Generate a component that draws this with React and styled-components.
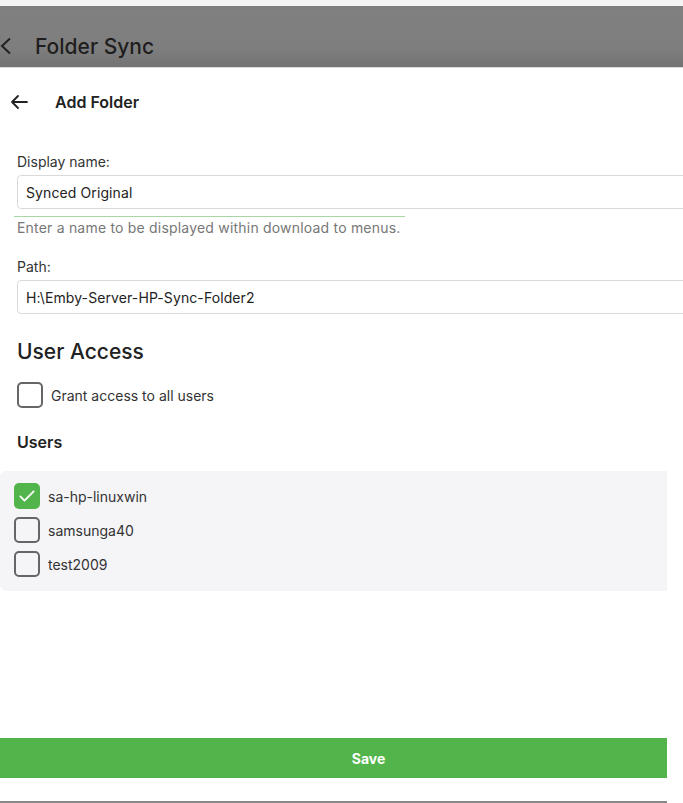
import React, { useState } from 'react'
import styled, { createGlobalStyle } from 'styled-components'

const GlobalStyle = createGlobalStyle`
	body {
		margin: 0;
		background: #fff;
		font-family: Inter, "Noto Sans", sans-serif;
		color: #222;
		overflow: hidden;
	}
`;

const Page = styled.div`
	width: 100%;
	height: 803px;
	display: flex;
	flex-direction: column;
	overflow: hidden;
`;

const TopStrip = styled.div`
	height: 6px;
	background: #f4f4f4;
`;

const Header = styled.div`
	box-sizing: border-box;
	height: 62px;
	display: flex;
	align-items: center;
	gap: 23px;
	padding-top: 19px;
	background: linear-gradient(to bottom, #808080 0%, #7e7e7e 70%, #737373 100%);
	border-bottom: 1px solid #dcdcdc;
`;

const HeaderTitle = styled.h1`
	margin: 0;
	font-size: 21px;
	font-weight: 500;
	color: #1e1e1e;
`;

const IconButton = styled.div`
	display: flex;
	align-items: center;
	justify-content: center;
	width: ${props => props.size || 24}px;
	color: #222;
	margin-left: ${props => props.offset || 0}px;
`;

const SubHeader = styled.div`
	display: flex;
	align-items: center;
	height: 34px;
	margin-top: 17px;
	gap: 27px;
`;

const SubTitle = styled.h2`
	margin: 0;
	font-size: 16px;
	font-weight: 600;
	color: #222;
`;

const Form = styled.div`
	display: flex;
	flex-direction: column;
	padding: 0 0 0 17px;
	margin-top: 33px;
`;

const Label = styled.label`
	font-size: 14px;
	line-height: 20px;
	color: #333;
	margin-top: ${props => props.top || 0}px;
`;

const Input = styled.div`
	box-sizing: border-box;
	width: calc(100% + 40px);
	height: 34px;
	margin-top: 3px;
	border: 1px solid #dadada;
	border-radius: 4px;
	display: flex;
	align-items: center;
	padding-left: 8px;
	font-size: 14px;
	letter-spacing: 0.1px;
	color: #222;
`;

const Underline = styled.div`
	width: 391px;
	height: 1px;
	background: #a9d6a5;
	margin: 7px 0 0 -3px;
`;

const Help = styled.div`
	font-size: 14px;
	line-height: 20px;
	letter-spacing: 0.2px;
	color: #777;
	margin-top: 1px;
`;

const SectionTitle = styled.h3`
	margin: 25px 0 0;
	font-size: 21px;
	font-weight: 500;
	line-height: 26px;
	color: #222;
`;

const CheckRow = styled.label`
	display: flex;
	align-items: center;
	gap: 8px;
	height: ${props => props.h || 34}px;
	font-size: 14px;
	color: #333;
	cursor: pointer;
`;

const Box = styled.span`
	box-sizing: border-box;
	width: 26px;
	height: 26px;
	flex: none;
	border-radius: 5px;
	border: ${props => (props.checked ? 'none' : '2px solid #666')};
	background: ${props => (props.checked ? '#52b54b' : 'transparent')};
	display: flex;
	align-items: center;
	justify-content: center;
`;

const GrantRow = styled(CheckRow)`
	margin-top: 17px;
`;

const UsersTitle = styled.h4`
	margin: 23px 0 0;
	font-size: 16px;
	font-weight: 600;
	line-height: 22px;
	color: #222;
`;

const UsersPanel = styled.div`
	margin: 18px 16px 0 0;
	padding: 8px 14px 10px;
	background: #f5f5f7;
	border-radius: 6px 0 0 6px;
	display: flex;
	flex-direction: column;
`;

const Spacer = styled.div`
	flex: 1;
`;

const SaveButton = styled.button`
	margin: 0 16px 0 0;
	height: 40px;
	border: none;
	padding: 0 0 0 70px;
	background: #52b54b;
	color: #fff;
	font-family: Inter, "Noto Sans", sans-serif;
	font-size: 14px;
	font-weight: 700;
	cursor: pointer;
`;

const Footer = styled.div`
	box-sizing: border-box;
	height: 25px;
	border-bottom: 2px solid #888;
	margin-right: 16px;
`;

const Check = () => (
	<svg width="20" height="20" viewBox="0 0 24 24" fill="none" stroke="#fff" strokeWidth="2.2" strokeLinecap="round" strokeLinejoin="round">
		<path d="M4 12.5l5 5L20 6.5" />
	</svg>
);

const CheckBox = ({ checked, onChange, children, h }) => (
	<CheckRow h={h} onClick={onChange}>
		<Box checked={checked}>{checked && <Check />}</Box>
		{children}
	</CheckRow>
);

const users = [
	{ id: 1, name: 'sa-hp-linuxwin', checked: true },
	{ id: 2, name: 'samsunga40', checked: false },
	{ id: 3, name: 'test2009', checked: false },
];

export default function App() {
	const [list, setList] = useState(users);
	const [grant, setGrant] = useState(false);

	const toggle = (id) => {
		setList(list.map(u => (u.id === id ? { ...u, checked: !u.checked } : u)));
	};

	return (
		<Page>
			<GlobalStyle />
			<TopStrip />
			<Header>
				<IconButton size={12}>
					<svg width="12" height="18" viewBox="0 0 12 18" fill="none" stroke="#222" strokeWidth="2">
						<path d="M10 1.5L2 9l8 7.5" />
					</svg>
				</IconButton>
				<HeaderTitle>Folder Sync</HeaderTitle>
			</Header>

			<SubHeader>
				<IconButton size={18} offset={10}>
					<svg width="18" height="16" viewBox="0 0 18 16" fill="none" stroke="#222" strokeWidth="1.8" strokeLinecap="round" strokeLinejoin="round">
						<path d="M17 8H2M8 2L2 8l6 6" />
					</svg>
				</IconButton>
				<SubTitle>Add Folder</SubTitle>
			</SubHeader>

			<Form>
				<Label>Display name:</Label>
				<Input>Synced Original</Input>
				<Underline />
				<Help>Enter a name to be displayed within download to menus.</Help>

				<Label top={19}>Path:</Label>
				<Input>H:\Emby-Server-HP-Sync-Folder2</Input>

				<SectionTitle>User Access</SectionTitle>
				<GrantRow h={26}>
					<Box checked={grant} onClick={() => setGrant(!grant)}>{grant && <Check />}</Box>
					Grant access to all users
				</GrantRow>

				<UsersTitle>Users</UsersTitle>
			</Form>

			<UsersPanel>
				{list.map(u => (
					<CheckBox key={u.id} checked={u.checked} onChange={() => toggle(u.id)}>
						{u.name}
					</CheckBox>
				))}
			</UsersPanel>

			<Spacer />
			<SaveButton>Save</SaveButton>
			<Footer />
		</Page>
	)
}
